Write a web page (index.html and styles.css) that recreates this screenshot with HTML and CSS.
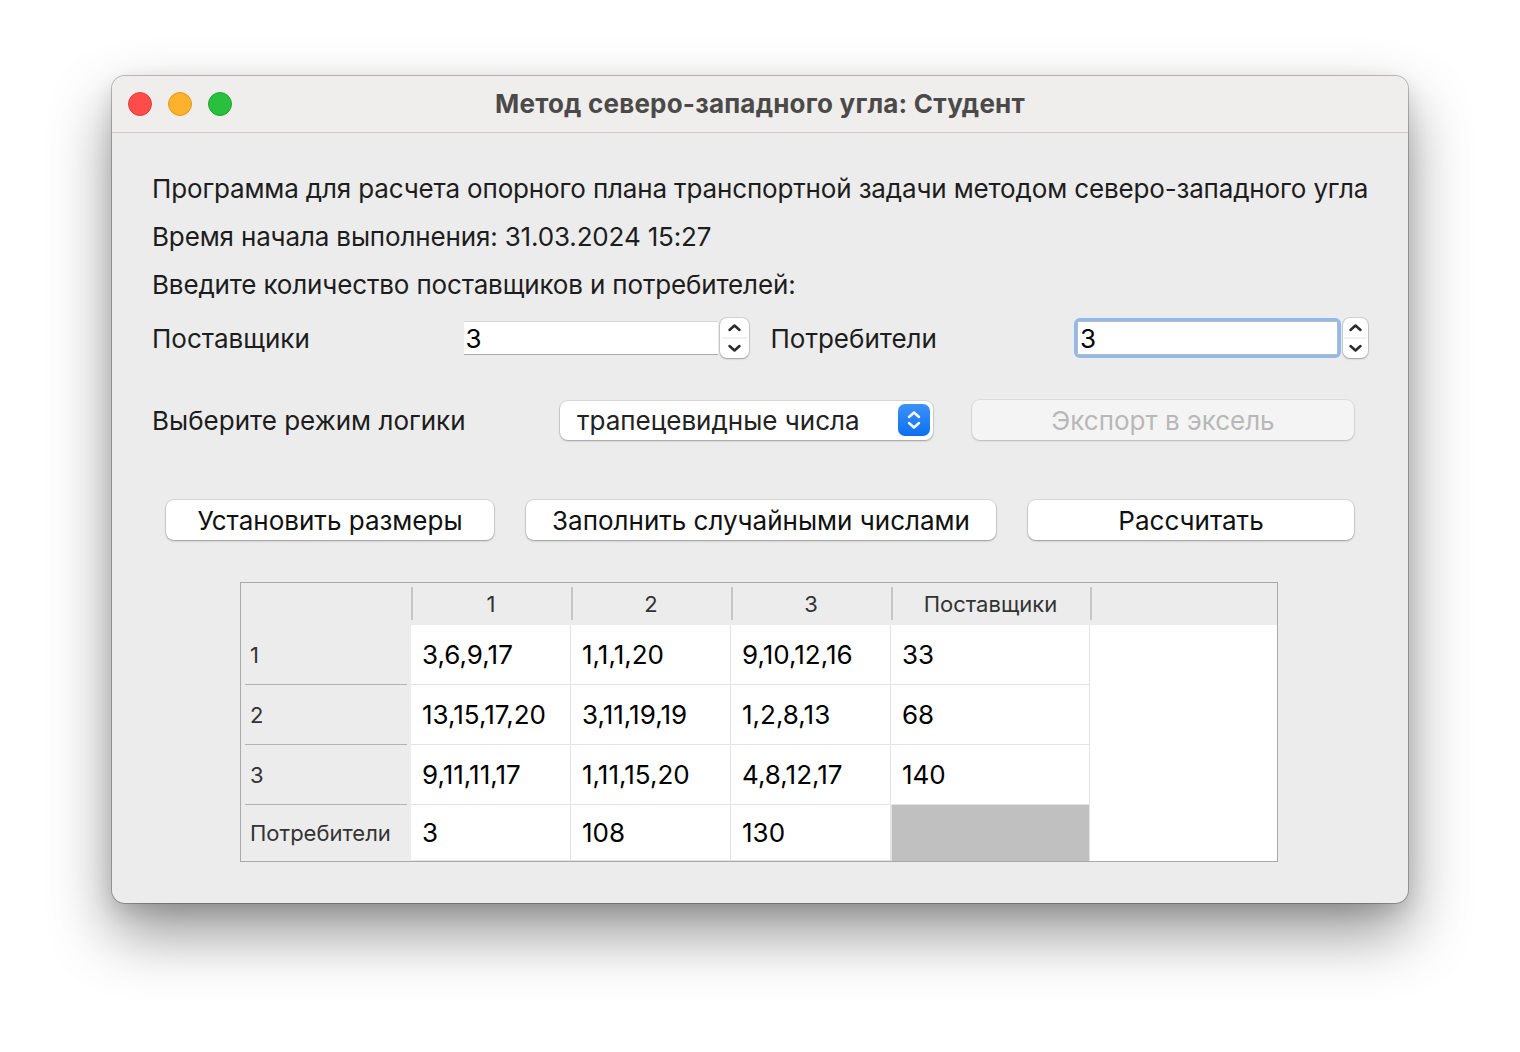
FILE: index.html
```html
<!DOCTYPE html>
<html lang="ru">
<head>
    <meta charset="UTF-8">
    <meta name="viewport" content="width=device-width, initial-scale=1.0">
    <title>Метод северо-западного угла: Студент</title>
    <link rel="stylesheet" href="styles.css">
</head>
<body>

    <div class="window">
        <!-- Title bar -->
        <div class="titlebar">
            <div class="lights">
                <span class="light red"></span>
                <span class="light yellow"></span>
                <span class="light green"></span>
            </div>
            <div class="title">Метод северо-западного угла: Студент</div>
        </div>

        <div class="content">
            <p class="line">Программа для расчета опорного плана транспортной задачи методом северо-западного угла</p>
            <p class="line">Время начала выполнения: 31.03.2024 15:27</p>
            <p class="line">Введите количество поставщиков и потребителей:</p>

            <!-- Sizes -->
            <div class="row sizes">
                <label class="label label-suppliers">Поставщики</label>
                <div class="spin">
                    <input class="spin-input" type="text" value="3">
                    <div class="stepper">
                        <svg width="29" height="40" viewBox="0 0 29 40">
                            <path d="M9.5 12 L14.5 7.5 L19.5 12" fill="none" stroke="#2b2b2b" stroke-width="2.5" stroke-linecap="round" stroke-linejoin="round"/>
                            <line x1="2" y1="20" x2="27" y2="20" stroke="#e2e2e2" stroke-width="1"/>
                            <path d="M9.5 28 L14.5 32.5 L19.5 28" fill="none" stroke="#2b2b2b" stroke-width="2.5" stroke-linecap="round" stroke-linejoin="round"/>
                        </svg>
                    </div>
                </div>
                <label class="label label-consumers">Потребители</label>
                <div class="spin">
                    <div class="focus-ring">
                        <input class="spin-input wide" type="text" value="3">
                    </div>
                    <div class="stepper narrow">
                        <svg width="25" height="40" viewBox="0 0 25 40">
                            <path d="M7.5 12 L12.5 7.5 L17.5 12" fill="none" stroke="#2b2b2b" stroke-width="2.5" stroke-linecap="round" stroke-linejoin="round"/>
                            <line x1="1" y1="20" x2="24" y2="20" stroke="#e2e2e2" stroke-width="1"/>
                            <path d="M7.5 28 L12.5 32.5 L17.5 28" fill="none" stroke="#2b2b2b" stroke-width="2.5" stroke-linecap="round" stroke-linejoin="round"/>
                        </svg>
                    </div>
                </div>
            </div>

            <!-- Logic mode -->
            <div class="row mode">
                <label class="label label-mode">Выберите режим логики</label>
                <div class="combo">
                    <span class="combo-text">трапецевидные числа</span>
                    <span class="combo-arrow">
                        <svg width="32" height="32" viewBox="0 0 32 32">
                            <path d="M11 13 L16 8.5 L21 13" fill="none" stroke="#fff" stroke-width="2.4" stroke-linecap="round" stroke-linejoin="round"/>
                            <path d="M11 19 L16 23.5 L21 19" fill="none" stroke="#fff" stroke-width="2.4" stroke-linecap="round" stroke-linejoin="round"/>
                        </svg>
                    </span>
                </div>
                <button class="btn btn-export" disabled>Экспорт в эксель</button>
            </div>

            <!-- Actions -->
            <div class="row actions">
                <button class="btn btn-size">Установить размеры</button>
                <button class="btn btn-random">Заполнить случайными числами</button>
                <button class="btn btn-calc">Рассчитать</button>
            </div>

            <!-- Table -->
            <div class="table">
                <div class="th corner"></div>
                <div class="th">1</div>
                <div class="th">2</div>
                <div class="th">3</div>
                <div class="th">Поставщики</div>
                <div class="th filler-head"></div>

                <div class="rh">1</div>
                <div class="td">3,6,9,17</div>
                <div class="td">1,1,1,20</div>
                <div class="td">9,10,12,16</div>
                <div class="td">33</div>
                <div class="filler"></div>

                <div class="rh">2</div>
                <div class="td">13,15,17,20</div>
                <div class="td">3,11,19,19</div>
                <div class="td">1,2,8,13</div>
                <div class="td">68</div>

                <div class="rh">3</div>
                <div class="td">9,11,11,17</div>
                <div class="td">1,11,15,20</div>
                <div class="td">4,8,12,17</div>
                <div class="td">140</div>

                <div class="rh last">Потребители</div>
                <div class="td">3</div>
                <div class="td">108</div>
                <div class="td">130</div>
                <div class="td empty"></div>
            </div>
        </div>
    </div>

</body>
</html>
```

FILE: styles.css
```css
html {
    background-color: #fff;
}

body {
    margin: 0;
    min-height: 1052px;
    box-sizing: border-box;
    padding: 76px 0 0 112px;
    background-color: #fff;
    font-family: Inter, "Liberation Sans", Arial, sans-serif;
    color: #1d1d1d;
}

.window {
    width: 1296px;
    height: 827px;
    background-color: #ececec;
    border-radius: 13px;
    overflow: hidden;
    box-shadow: 0 0 0 1px rgba(0, 0, 0, 0.24), 0 30px 62px rgba(0, 0, 0, 0.42), 0 8px 20px rgba(0, 0, 0, 0.12);
}

/* Title bar */
.titlebar {
    height: 56px;
    background-color: #efeeed;
    border-bottom: 1px solid #cdcccb;
    display: flex;
    align-items: center;
    position: relative;
}

.lights {
    display: flex;
    gap: 16px;
    padding-left: 16px;
    position: absolute;
    left: 0;
    top: 16px;
}

.light {
    width: 24px;
    height: 24px;
    border-radius: 50%;
    box-sizing: border-box;
}

.red { background-color: #fe4d49; border: 1px solid #e0403c; }
.yellow { background-color: #feb12a; border: 1px solid #df9a1f; }
.green { background-color: #29c03e; border: 1px solid #20a633; }

.title {
    flex: 1;
    text-align: center;
    font-weight: 700;
    font-size: 26px;
    letter-spacing: 0.2px;
    color: #4b4a49;
    margin-top: -2px;
}

/* Content */
.content {
    padding: 32px 40px 0 40px;
}

.line {
    margin: 0;
    height: 48px;
    line-height: 48px;
    font-size: 26px;
    letter-spacing: -0.15px;
    white-space: nowrap;
}

.row {
    display: flex;
    align-items: center;
    height: 48px;
}

.label {
    font-size: 26px;
    white-space: nowrap;
}

.sizes {
    margin-top: 5px;
}

.label-suppliers { width: 312px; }
.label-consumers { width: 304px; margin-left: 22px; }

.spin {
    display: flex;
    align-items: center;
    gap: 2px;
}

.spin-input {
    width: 254px;
    height: 34px;
    box-sizing: border-box;
    border: none;
    border-top: 1px solid #d6d6d6;
    border-bottom: 1px solid #a9a9a9;
    background-color: #fff;
    font-family: inherit;
    font-size: 26px;
    padding: 0 2px;
    color: #000;
    outline: none;
}

.spin-input.wide {
    width: 261px;
    border: 1px solid #b9b9b9;
}

.focus-ring {
    padding: 3px;
    border-radius: 6px;
    background-color: #8fb9ef;
}

.stepper {
    width: 29px;
    height: 40px;
    background-color: #fff;
    border-radius: 7px;
    box-shadow: 0 0 0 1px rgba(0, 0, 0, 0.1), 0 1px 2px rgba(0, 0, 0, 0.25);
}

.stepper.narrow {
    width: 25px;
}

.stepper svg {
    display: block;
}

.mode {
    margin-top: 34px;
}

.label-mode { width: 408px; }

.combo {
    width: 373px;
    height: 39px;
    box-sizing: border-box;
    background-color: #fff;
    border-radius: 8px;
    box-shadow: 0 0 0 1px rgba(0, 0, 0, 0.08), 0 1px 2px rgba(0, 0, 0, 0.28);
    display: flex;
    align-items: center;
    justify-content: space-between;
    padding: 0 3px 0 17px;
}

.combo-text {
    font-size: 26px;
    color: #222;
}

.combo-arrow {
    width: 32px;
    height: 32px;
    border-radius: 7px;
    background: linear-gradient(#3c92f9, #0d6ff0);
}

.combo-arrow svg {
    display: block;
}

.btn {
    height: 40px;
    background-color: #fff;
    border: none;
    border-radius: 8px;
    box-shadow: 0 0 0 1px rgba(0, 0, 0, 0.08), 0 1px 2px rgba(0, 0, 0, 0.3);
    font-family: inherit;
    font-size: 26px;
    color: #111;
    padding: 0;
}

.btn-export {
    width: 382px;
    margin-left: 39px;
    background-color: #f4f4f4;
    color: #b8b8b8;
    box-shadow: 0 0 0 1px rgba(0, 0, 0, 0.06), 0 1px 2px rgba(0, 0, 0, 0.16);
}

.actions {
    margin-top: 52px;
    padding-left: 14px;
    gap: 32px;
}

.btn-size { width: 328px; }
.btn-random { width: 470px; }
.btn-calc { width: 326px; }

/* Table */
.table {
    margin: 38px 0 0 88px;
    width: 1038px;
    height: 280px;
    box-sizing: border-box;
    border: 1px solid #a9a9a9;
    background-color: #fff;
    display: grid;
    grid-template-columns: 170px 160px 160px 160px 199px 1fr;
    grid-template-rows: 42px 60px 60px 60px 1fr;
}

.th {
    background-color: #ececec;
    font-size: 22px;
    color: #333;
    display: flex;
    align-items: center;
    justify-content: center;
    position: relative;
}

.th::before {
    content: "";
    position: absolute;
    left: 0;
    top: 4px;
    bottom: 5px;
    width: 2px;
    background-color: #c6c6c6;
}

.th.corner::before {
    display: none;
}

.rh {
    background-color: #ececec;
    font-size: 22px;
    color: #333;
    display: flex;
    align-items: center;
    padding-left: 9px;
    position: relative;
}

.rh::after {
    content: "";
    position: absolute;
    left: 4px;
    right: 4px;
    bottom: -1px;
    height: 2px;
    background-color: #b3b3b3;
}

.rh.last::after {
    display: none;
}

.td {
    background-color: #fff;
    border-right: 1px solid #e3e3e3;
    border-bottom: 1px solid #e3e3e3;
    font-size: 26px;
    color: #000;
    display: flex;
    align-items: center;
    padding-left: 11px;
}

.td.empty {
    background-color: #c0c0c0;
    border-left: 1px solid #e3e3e3;
    border-bottom: none;
}

.filler {
    grid-column: 6;
    grid-row: 2 / 6;
    background-color: #fff;
}
```
